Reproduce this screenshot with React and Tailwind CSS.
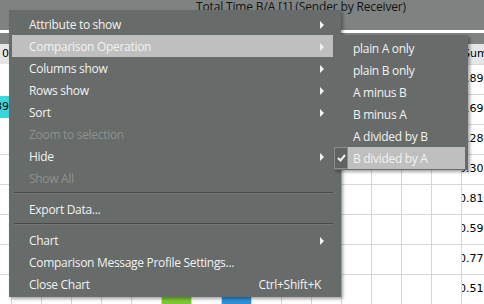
const mainItems = [
  { label: 'Attribute to show', sub: true },
  { label: 'Comparison Operation', sub: true, active: true },
  { label: 'Columns show', sub: true },
  { label: 'Rows show', sub: true },
  { label: 'Sort', sub: true },
  { label: 'Zoom to selection', disabled: true },
  { label: 'Hide', sub: true },
  { label: 'Show All', disabled: true },
  { sep: true },
  { label: 'Export Data...' },
  { sep: true },
  { label: 'Chart', sub: true },
  { label: 'Comparison Message Profile Settings...' },
  { label: 'Close Chart', shortcut: 'Ctrl+Shift+K' }
]

const subItems = [
  'plain A only',
  'plain B only',
  'A minus B',
  'B minus A',
  'A divided by B',
  'B divided by A'
]

const values = ['0.892', '0.695', '0.280', '0.307', '0.811', '0.590', '0.779', '0.510']

function Arrow() {
  return <span className="ml-auto w-0 h-0 border-y-[4px] border-y-transparent border-l-[4px] border-l-[#f2f2f2]" />
}

function Table() {
  const rows = [0, 1, 2, 3, 4, 5, 6, 7, 8]
  const cols = Array.from({ length: 17 }, (_, i) => i)

  return (
    <div className="grid grid-cols-[11px_repeat(15,30px)_23px] grid-rows-[20px_repeat(8,30px)] font-['DejaVu_Sans',sans-serif] text-[11px] text-black">
      {rows.map(r =>
        cols.map(c => {
          const header = r === 0
          let cls = 'overflow-hidden whitespace-nowrap flex items-center'
          if (header) cls += ' bg-[#e6e6e6]'
          if (c > 0) cls += ' border-l border-l-[#d6d6d6]'
          if (!header && (r >= 4 || c === 16)) cls += ' border-t border-t-[#d6d6d6]'
          if (r === 8 && c === 6) cls += ' bg-[#7cc833]'
          if (r === 8 && c === 8) cls += ' bg-[#2f8fd5]'

          let text = null
          if (c === 0 && r === 0) text = <span className="ml-auto pr-[2px]">0</span>
          if (c === 0 && r === 2)
            text = (
              <div className="self-start mt-[2px] w-full h-[22px] bg-[#3ad8dc] flex items-center justify-end pr-[2px]">
                189
              </div>
            )
          if (c === 16 && r === 0) text = <span className="pl-[1px]">Sum</span>
          if (c === 16 && r > 0) text = <span className="-ml-[3px]">{values[r - 1]}</span>

          return (
            <div key={r + '-' + c} className={cls}>
              {text}
            </div>
          )
        })
      )}
    </div>
  )
}

export default function App() {
  return (
    <div className="relative w-[484px] h-[304px] overflow-hidden bg-white font-['Open_Sans',sans-serif]">
      <div className="h-[31px] bg-[#7e8280] pl-[196px] text-[12px] tracking-[-0.15px] leading-[16px] text-[#141414] -mt-[1px]">
        Total Time B/A [1] (Sender by Receiver)
      </div>
      <div className="h-[3px] bg-white" />
      <div className="h-[11px] bg-[#7e8280]" />
      <Table />

      {/* context menu */}
      <div className="absolute left-[9px] top-[10px] w-[332px] bg-[#676b69] pt-[3px] pb-[2px] shadow-[2px_2px_3px_rgba(0,0,0,0.35)] text-[12px] tracking-[-0.3px] text-[#f2f2f2]">
        {mainItems.map((item, i) =>
          item.sep ? (
            <div key={i} className="h-[9px] pt-[3px] ml-[5px] mr-[8px]">
              <div className="h-[1px] bg-[#474b49]" />
              <div className="h-[1px] bg-[#727674]" />
            </div>
          ) : (
            <div
              key={i}
              className={
                'h-[22px] ml-[3px] mr-[8px] pl-[17px] pr-[9px] pt-[1px] flex items-center whitespace-nowrap ' +
                (item.active ? 'bg-[#bfbfbf] ' : '') +
                (item.disabled ? 'text-[#8d918f]' : '')
              }
            >
              <span>{item.label}</span>
              {item.sub && <Arrow />}
              {item.shortcut && <span className="ml-auto mr-[3px]">{item.shortcut}</span>}
            </div>
          )
        )}
      </div>

      {/* submenu */}
      <div className="absolute left-[334px] top-[35px] w-[134px] bg-[#676b69] pt-[2px] pb-[1px] shadow-[2px_2px_3px_rgba(0,0,0,0.35)] text-[12px] tracking-[-0.3px] text-[#f2f2f2]">
        {subItems.map((label, i) => {
          const checked = i === subItems.length - 1
          return (
            <div key={label} className="h-[22px] flex">
              <div className="w-[14px] flex items-center justify-center">
                {checked && (
                  <div className="w-[14px] h-[22px] border border-[#8a8e8c] bg-[#5f6361] flex items-center justify-center">
                    <svg width="9" height="8" viewBox="0 0 9 8">
                      <path d="M1 4 L3.5 6.5 L8 1" fill="none" stroke="#f2f2f2" strokeWidth="2" />
                    </svg>
                  </div>
                )}
              </div>
              <div className={'flex-1 mr-[3px] pl-[5px] pt-[1px] flex items-center whitespace-nowrap ' + (checked ? 'bg-[#bfbfbf]' : '')}>
                {label}
              </div>
            </div>
          )
        })}
      </div>
    </div>
  )
}
